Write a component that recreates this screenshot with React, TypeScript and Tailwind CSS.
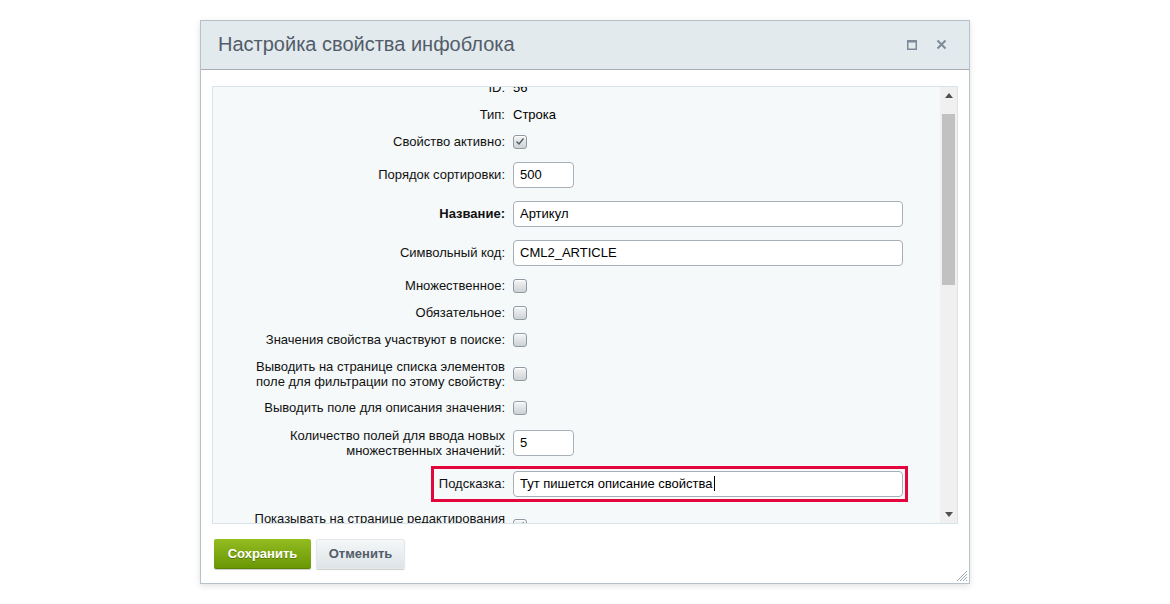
import React from 'react'

const font = { fontFamily: '"Liberation Sans", Arial, sans-serif' }

function Checkbox({ checked }: { checked?: boolean }) {
    return (
        <div className="w-[14px] h-[14px] rounded-[3px] border border-[#8f9aa3] bg-gradient-to-b from-[#f4f5f6] to-[#cdd2d5] flex items-center justify-center shadow-[inset_0_1px_0_#fff]">
            {checked && (
                <svg width="10" height="9" viewBox="0 0 10 9">
                    <path d="M1.5 4.5 L4 7 L8.5 1.5" fill="none" stroke="#555d63" strokeWidth="1.4" />
                </svg>
            )}
        </div>
    )
}

function Field({ value, w, caret }: { value: string; w: string; caret?: boolean }) {
    return (
        <div className={`${w} h-[26px] bg-white border border-[#a7b0b8] rounded-[4px] px-[6px] flex items-center text-[13px] text-black`}>
            {value}
            {caret && <span className="inline-block w-px h-[15px] bg-black ml-px" />}
        </div>
    )
}

interface RowProps {
    label: React.ReactNode
    h: string
    bold?: boolean
    children?: React.ReactNode
}

function Row({ label, h, bold, children }: RowProps) {
    return (
        <div className={`flex items-center ${h}`}>
            <div className={`w-[292px] text-right leading-[15px] text-[13px] text-[#111] ${bold ? 'font-bold' : ''}`}>{label}</div>
            <div className="pl-[8px] flex items-center">{children}</div>
        </div>
    )
}

export default function App() {
    return (
        <div className="min-h-screen bg-white pt-[20px]" style={font}>
            <div className="relative mx-auto w-[770px] h-[564px] bg-white border border-[#b5c2cb] shadow-[0_2px_6px_rgba(0,0,0,0.12)] flex flex-col">
                <div className="h-[49px] bg-[#e2eaed] border-b border-[#a8adb1] flex items-center justify-between pl-[17px] pr-[22px] pb-[3px]">
                    <div className="text-[20px] text-[#535c69] leading-none">Настройка свойства инфоблока</div>
                    <div className="flex items-center gap-[19px] pt-[2px]">
                        <svg width="10" height="10" viewBox="0 0 10 10">
                            <rect x="0.75" y="0.75" width="8.5" height="8.5" fill="none" stroke="#7d8b99" strokeWidth="1.5" />
                            <rect x="0" y="0" width="10" height="2.5" fill="#7d8b99" />
                        </svg>
                        <svg width="11" height="11" viewBox="0 0 11 11">
                            <path d="M1.5 1.5 L9.5 9.5 M9.5 1.5 L1.5 9.5" stroke="#7d8b99" strokeWidth="2" />
                        </svg>
                    </div>
                </div>

                <div className="px-[11px] pt-[16px]">
                    <div className="h-[438px] border border-[#d9e4ea] bg-[#f5f9f9] flex overflow-hidden">
                        <div className="flex-1 overflow-hidden">
                            {/* content is scrolled a little, so the first row is cut at the top */}
                            <div className="-mt-[13px] flex flex-col">
                                <Row label="ID:" h="h-[27px]"><span className="text-[13px]">56</span></Row>
                                <Row label="Тип:" h="h-[27px]"><span className="text-[13px]">Строка</span></Row>
                                <Row label="Свойство активно:" h="h-[27px]"><Checkbox checked /></Row>
                                <Row label="Порядок сортировки:" h="h-[39px]"><Field value="500" w="w-[61px]" /></Row>
                                <Row label="Название:" h="h-[39px]" bold><Field value="Артикул" w="w-[390px]" /></Row>
                                <Row label="Символьный код:" h="h-[39px]"><Field value="CML2_ARTICLE" w="w-[390px]" /></Row>
                                <Row label="Множественное:" h="h-[27px]"><Checkbox /></Row>
                                <Row label="Обязательное:" h="h-[27px]"><Checkbox /></Row>
                                <Row label="Значения свойства участвуют в поиске:" h="h-[27px]"><Checkbox /></Row>
                                <Row label={<>Выводить на странице списка элементов<br />поле для фильтрации по этому свойству:</>} h="h-[41px]"><Checkbox /></Row>
                                <Row label="Выводить поле для описания значения:" h="h-[27px]"><Checkbox /></Row>
                                <Row label={<>Количество полей для ввода новых<br />множественных значений:</>} h="h-[43px]"><Field value="5" w="w-[61px]" /></Row>
                                <div className="relative">
                                    <Row label="Подсказка:" h="h-[39px]"><Field value="Тут пишется описание свойства" w="w-[390px]" caret /></Row>
                                    <div className="absolute left-[218px] top-[2px] w-[477px] h-[36px] border-[3px] border-[#e3063c]" />
                                </div>
                                <Row label={<>Показывать на странице редактирования<br />элемента поле для описания свойства:</>} h="h-[45px]"><Checkbox checked /></Row>
                            </div>
                        </div>
                        <div className="w-[17px] bg-[#f0f0f0] flex flex-col items-center">
                            <div className="h-[17px] flex items-center justify-center">
                                <svg width="8" height="5" viewBox="0 0 8 5"><path d="M0 5 L4 0 L8 5 Z" fill="#505050" /></svg>
                            </div>
                            <div className="w-[13px] h-[171px] mt-[10px] bg-[#c1c1c1]" />
                            <div className="flex-1" />
                            <div className="h-[17px] flex items-center justify-center">
                                <svg width="8" height="5" viewBox="0 0 8 5"><path d="M0 0 L4 5 L8 0 Z" fill="#505050" /></svg>
                            </div>
                        </div>
                    </div>
                </div>

                <div className="px-[13px] pt-[15px] flex gap-[5px]">
                    <div className="w-[97px] h-[30px] rounded-[2px] bg-gradient-to-b from-[#93bc1f] to-[#6a9705] border-b border-[#5b8204] shadow-[0_1px_1px_rgba(0,0,0,0.2)] flex items-center justify-center text-white font-bold text-[13px] [text-shadow:0_1px_0_rgba(0,0,0,0.3)]">
                        Сохранить
                    </div>
                    <div className="w-[89px] h-[30px] rounded-[2px] bg-gradient-to-b from-[#f5f7f8] to-[#dde4e7] border border-[#e3e8ea] shadow-[0_1px_1px_rgba(0,0,0,0.2)] flex items-center justify-center text-[#535c69] font-bold text-[13px]">
                        Отменить
                    </div>
                </div>

                <svg className="absolute right-[1px] bottom-[1px]" width="13" height="13" viewBox="0 0 13 13">
                    <path d="M12 2 L2 12 M12 5 L5 12 M12 8 L8 12 M12 11 L11 12" stroke="#9aa4ab" strokeWidth="1" />
                </svg>
            </div>
        </div>
    )
}
